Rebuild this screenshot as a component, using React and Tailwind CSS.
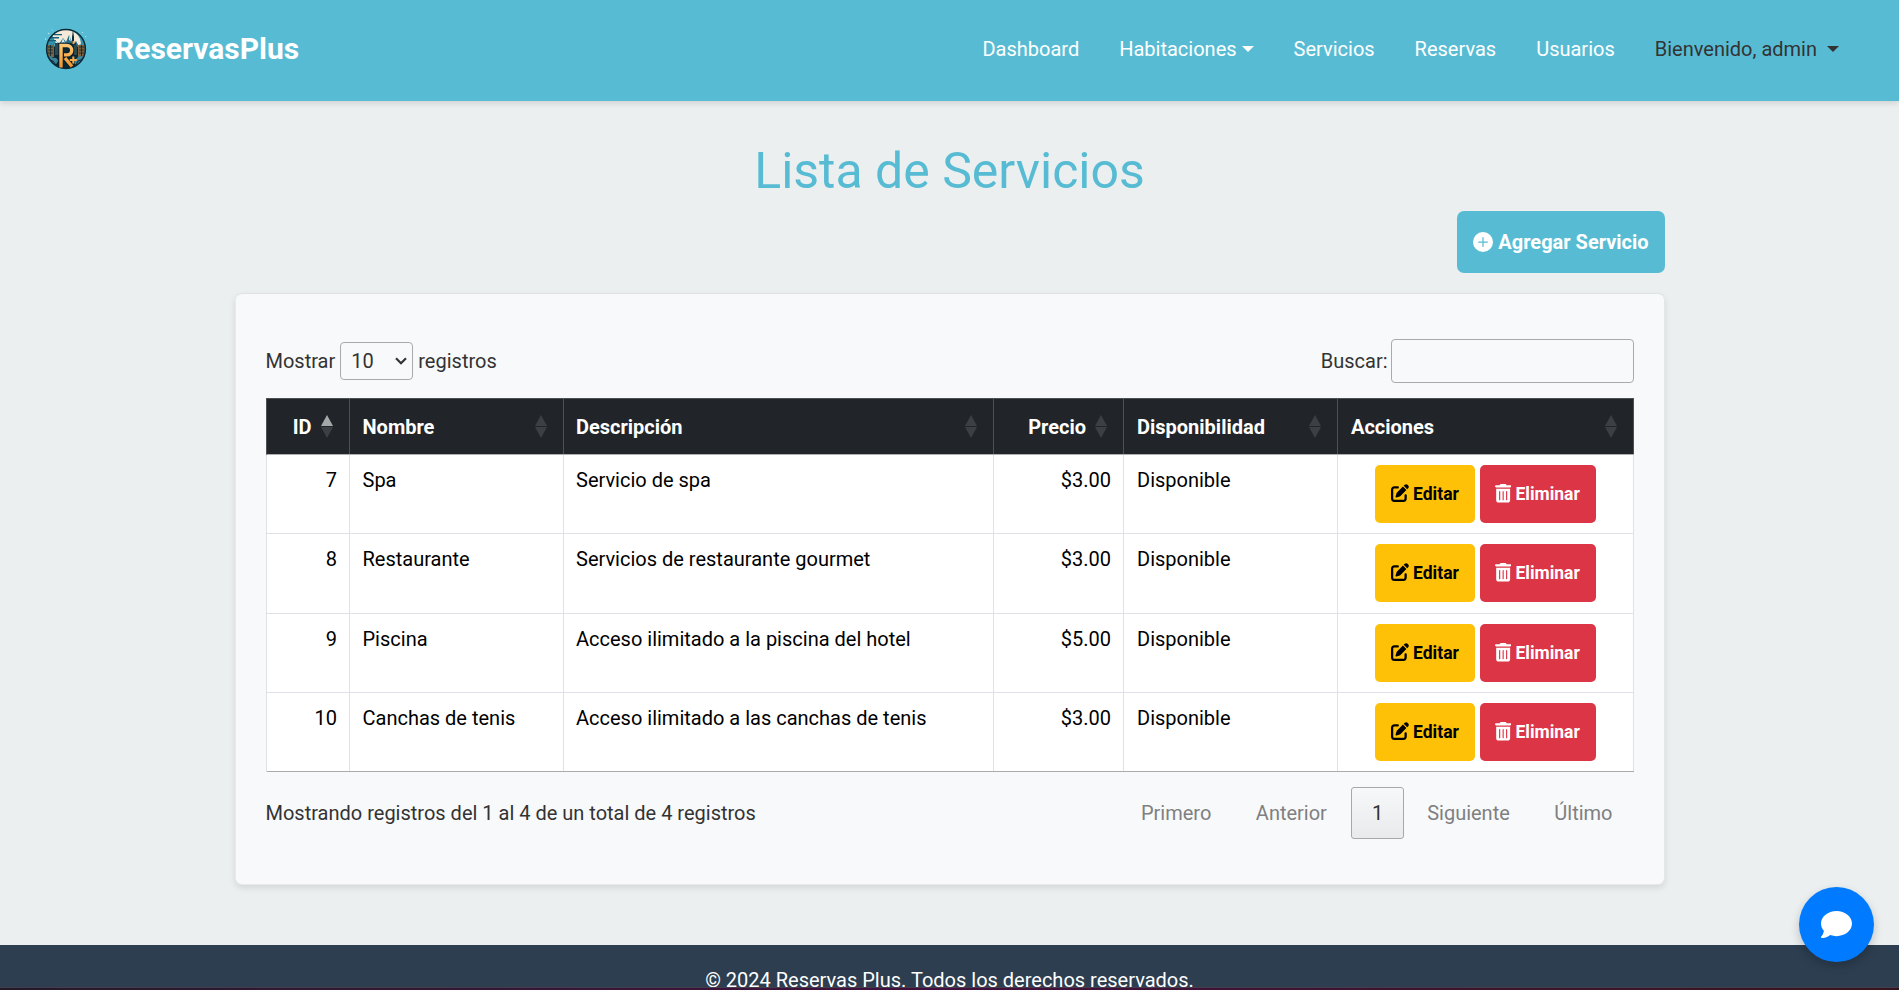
import { FaTrashCan, FaPenToSquare, FaComment } from "react-icons/fa6";
import { BsPlusCircleFill } from "react-icons/bs";

const columns = [
  { label: "ID", cls: "w-[83px] justify-end pr-[37px]", active: true },
  { label: "Nombre", cls: "w-[214px] pl-[13px]" },
  { label: "Descripción", cls: "w-[430px] pl-[12.5px]" },
  { label: "Precio", cls: "w-[130px] justify-end pr-[36.5px]" },
  { label: "Disponibilidad", cls: "w-[214px] pl-[13.5px]" },
  { label: "Acciones", cls: "w-[296px] pl-[13.5px]" },
];

const services = [
  { id: 7, name: "Spa", desc: "Servicio de spa", price: "$3.00", height: "h-[79px]" },
  { id: 8, name: "Restaurante", desc: "Servicios de restaurante gourmet", price: "$3.00", height: "h-[80px]" },
  { id: 9, name: "Piscina", desc: "Acceso ilimitado a la piscina del hotel", price: "$5.00", height: "h-[79px]" },
  { id: 10, name: "Canchas de tenis", desc: "Acceso ilimitado a las canchas de tenis", price: "$3.00", height: "h-[79px]" },
];

function Logo() {
  return (
    <svg className="h-[44px] w-[44px]" viewBox="0 0 44 44">
      <defs>
        <clipPath id="disc"><circle cx="22" cy="22" r="19.5" /></clipPath>
        <linearGradient id="gold" x1="0" y1="0" x2="0" y2="1">
          <stop offset="0" stopColor="#ffc772" />
          <stop offset="1" stopColor="#f0922a" />
        </linearGradient>
      </defs>
      <g fill="#b9e6ee">
        <circle cx="4.5" cy="6.5" r=".8" /><circle cx="1.5" cy="12" r=".7" /><circle cx="8" cy="3" r=".5" />
        <circle cx="38.5" cy="5.5" r=".6" /><circle cx="41.5" cy="9.5" r=".6" />
      </g>
      <g clipPath="url(#disc)">
        <rect width="44" height="44" fill="#2f91ab" />
        <path d="M8 8q7-6 16-5 12 2 13 14l-7 3-18-4z" fill="#f3ead9" />
        <path d="M6 10h9v1.4H6zM10 7h8v1.2h-8zM5 13h7v1.2H5z" fill="#17627a" />
        <path d="M6 22l6-8 3 3 4-6 3 4 3-7 4 9 3-3 5 9z" fill="#256f8b" />
        <path d="M12 14l3 4-3-1-2 2zM19 11l2 5-2-1-2 2zM25 8l2 6-2-1z" fill="#d9edef" />
        <path d="M28 20V10l1-7 1 7v10z" fill="#0c2b3a" />
        <path d="M26 16h6v6h-6z" fill="#12303e" />
        <rect y="20" width="44" height="24" fill="#0b2734" />
        <path d="M3 18h7v12H3zM34 18h7v12h-7z" fill="#80633a" />
        <path d="M11 16h4v12h-4zM30 18h3v10h-3z" fill="#2a4a50" />
        <path d="M4 20h5M4 23h5M4 26h5M35 20h5M35 23h5M35 26h5M6.500 18v11M37.500 18v11" stroke="#122b36" strokeWidth=".9" />
        <path d="M28.500 14h2v3h-2z" fill="#f0a443" />
        <path d="M2 31q4-4 7 0 4-1 5 3l-3 5-8-3zM41 31q-5-4-8 0-3 2-2 6l5 2 6-5z" fill="#3a8299" />
        <path d="M5 33l4 1 3 4M39 32l-5 2-2 4" stroke="#0b2734" fill="none" />
      </g>
      <circle cx="22" cy="22" r="19.400" fill="none" stroke="#0b2936" strokeWidth="1.500" />
      <path d="M17 40.500V18.500h6a4.700 4.700 0 0 1 0 9.400H20M21 31l7 8.500" fill="none" stroke="#08202c" strokeWidth="5.500" />
      <path d="M17 40.500V18.500h6a4.700 4.700 0 0 1 0 9.400H20M21 31l7 8.500" fill="none" stroke="url(#gold)" strokeWidth="3.400" />
      <path d="M29.300 29.500v7M25.800 33h7" stroke="#f7aa48" strokeWidth="2" />
    </svg>
  );
}

function Caret({ className }) {
  return <span className={"inline-block border-x-[6px] border-t-[6px] border-x-transparent " + className} />;
}

function SortArrows({ active }) {
  return (
    <svg className="absolute top-[16px] right-[16px] h-[23px] w-[12px]" viewBox="0 0 12 23">
      <path d="M6 0L12 11H0z" fill={active ? "#a6a7a8" : "#3c3f43"} />
      <path d="M6 23L12 12H0z" fill="#3c3f43" />
    </svg>
  );
}

export default function App() {
  return (
    <div className="flex h-[990px] flex-col overflow-hidden bg-[#ebeff0] font-[Roboto,sans-serif] text-[20px] leading-[30px] text-black">
      <header className="flex h-[101px] shrink-0 items-center bg-[#57bcd3] pb-[4px] pl-[44px] shadow-[0_2px_6px_rgba(0,0,0,0.13)]">
        <Logo />
        <span className="ml-[27px] pt-px text-[30px] font-bold text-white">ReservasPlus</span>
        <nav className="mr-[60px] ml-auto flex gap-[40px] text-white">
          <a>Dashboard</a>
          <a className="flex items-center">Habitaciones<Caret className="ml-[5px] border-t-white" /></a>
          <a>Servicios</a>
          <a>Reservas</a>
          <a>Usuarios</a>
          <a className="flex items-center text-[#333]">Bienvenido, admin<Caret className="ml-[10px] border-t-[#333]" /></a>
        </nav>
      </header>

      <main className="mx-auto w-[1430px] grow pt-[40px]">
        <h1 className="text-center text-[50px] leading-[60px] text-[#57bcd3]">Lista de Servicios</h1>
        <div className="mt-[10px] flex justify-end">
          <button className="flex h-[62px] w-[208px] items-center justify-center gap-[5px] rounded-[7px] bg-[#57bcd3] pl-[1px] font-bold whitespace-nowrap text-white">
            <BsPlusCircleFill className="h-[20px] w-[20px]" />Agregar Servicio
          </button>
        </div>

        <section className="mt-[20px] h-[592px] rounded-[7px] border border-t-[#dfe3e4] border-r-[#e3e7e8] border-b-[#e8ebec] border-l-[#e8ebec] bg-[#f8f9fb] px-[30px] pt-[45px] shadow-[0_3px_6px_rgba(0,0,0,0.1)]">
          <div className="flex h-[44px] items-center justify-between text-[#333]">
            <div className="flex items-center">
              Mostrar
              <div className="mx-[5px] flex h-[38px] w-[73px] items-center justify-between rounded-[4px] border border-[#aaa] pr-[5px] pl-[10px]">
                10
                <svg className="h-[8px] w-[12px]" viewBox="0 0 12 8"><path d="M1 1.200l5 5 5-5" fill="none" stroke="#333" strokeWidth="2.200" /></svg>
              </div>
              registros
            </div>
            <label className="flex items-center gap-[3px]">Buscar:<input className="h-[44px] w-[243px] rounded-[4px] border border-[#aaa] bg-transparent" /></label>
          </div>

          <div className="mt-[15px] w-[1368px]">
            <div className="flex h-[57px] border-t border-b border-l border-t-[#4d5154] border-b-[#adafb1] border-l-[#4d5154] bg-[#212529] font-bold text-white">
              {columns.map((c) => (
                <div key={c.label} className={"relative flex items-center border-r border-[#4d5154] " + c.cls}>
                  {c.label}
                  <SortArrows active={c.active} />
                </div>
              ))}
            </div>
            <div className="border-l border-[#dee2e6]">
              {services.map((s) => (
                <div key={s.id} className={"flex border-b border-[#dee2e6] bg-white last:border-[#a9abad] " + s.height}>
                  <div className="w-[83px] border-r border-[#dee2e6] pt-[10px] pr-[11.5px] text-right">{s.id}</div>
                  <div className="w-[214px] border-r border-[#dee2e6] pt-[10px] pl-[13px]">{s.name}</div>
                  <div className="w-[430px] border-r border-[#dee2e6] pt-[10px] pl-[12.5px]">{s.desc}</div>
                  <div className="w-[130px] border-r border-[#dee2e6] pt-[10px] pr-[11.5px] text-right">{s.price}</div>
                  <div className="w-[214px] border-r border-[#dee2e6] pt-[10px] pl-[13.5px]">Disponible</div>
                  <div className="flex w-[296px] justify-center gap-[5px] border-r border-[#dee2e6] pt-[10px] text-[17.5px] font-bold">
                    <button className="flex h-[58px] w-[100px] items-center justify-center gap-[4px] rounded-[5px] bg-[#ffc107] pl-px">
                      <FaPenToSquare className="mb-[2px] h-[18px] w-[18px]" />Editar
                    </button>
                    <button className="flex h-[58px] w-[116px] items-center justify-center gap-[4px] rounded-[5px] bg-[#dc3545] text-white">
                      <FaTrashCan className="mb-[1px] h-[18.6px] w-[16.3px]" />Eliminar
                    </button>
                  </div>
                </div>
              ))}
            </div>
          </div>

          <div className="mt-[15px] flex h-[52px] w-[1368px] items-center justify-between">
            <span className="text-[#333]">Mostrando registros del 1 al 4 de un total de 4 registros</span>
            <div className="flex gap-[2.5px] text-[#7f8081]">
              <span className="border border-transparent px-[20px] py-[10px]">Primero</span>
              <span className="border border-transparent px-[20px] py-[10px]">Anterior</span>
              <span className="-mr-[0.5px] ml-[0.5px] rounded-[3px] border border-[#a6a8a9] bg-linear-to-b from-[#f7f8fa] to-[#e9eaeb] px-[20px] py-[10px] text-[#333]">1</span>
              <span className="border border-transparent px-[20px] py-[10px]">Siguiente</span>
              <span className="border border-transparent px-[20px] py-[10px]">Último</span>
            </div>
          </div>
        </section>
      </main>

      <footer className="flex h-[45px] shrink-0 flex-col bg-[#2c3e50] text-center text-white">
        <p className="h-[42px] pt-[20px]">© 2024 Reservas Plus. Todos los derechos reservados.</p>
        <div className="h-[3px] border-t border-[#453d4c] bg-linear-to-r from-[#231a2a] via-[#43103f] to-[#35151d]" />
      </footer>

      <button className="fixed right-[25px] bottom-[28px] flex h-[75px] w-[75px] items-center justify-center rounded-full bg-[#007bff] text-white shadow-[0_4px_10px_rgba(0,0,0,0.2)]">
        <FaComment className="h-[31px] w-[31px]" />
      </button>
    </div>
  );
}
